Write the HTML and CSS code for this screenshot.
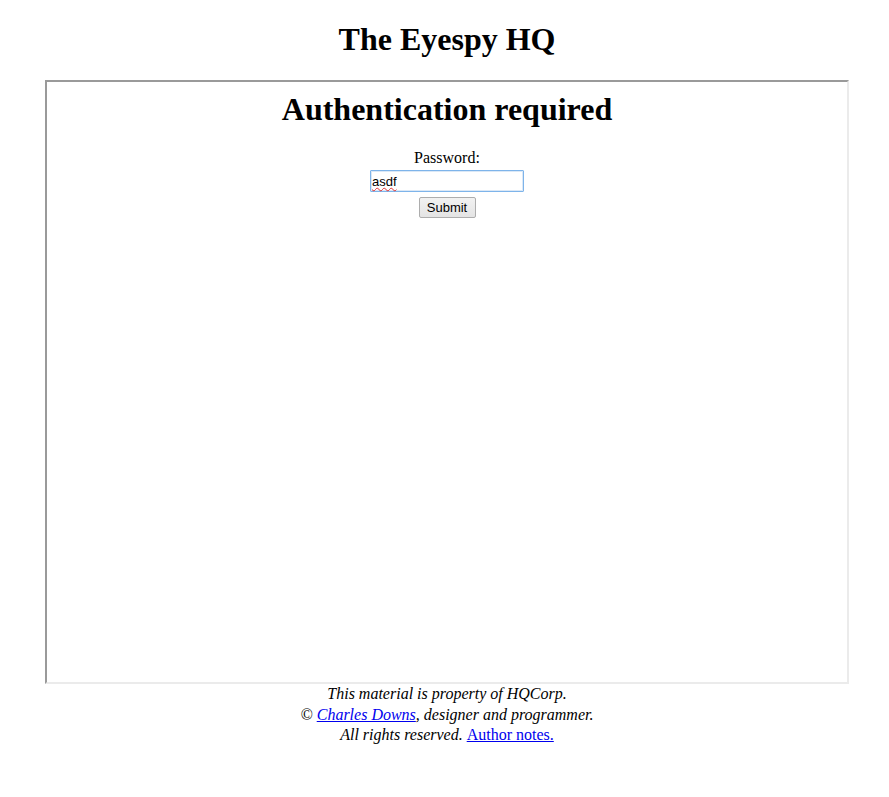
FILE: index.html
```html
<!DOCTYPE html>
<html>
<head>
<meta charset="utf-8">
<title>The Eyespy HQ</title>
<link rel="stylesheet" href="styles.css">
</head>
<body>
<div class="page">
  <h1 class="site-title">The Eyespy HQ</h1>
  <div class="frame">
    <h1 class="auth-title">Authentication required</h1>
    <form class="auth-form">
      <label class="pw-label" for="pw">Password:</label>
      <div class="input-wrap">
        <input class="pw-input" id="pw" type="text" value="asdf">
        <span class="spell" aria-hidden="true">asdf</span>
      </div>
      <button class="submit-btn" type="button">Submit</button>
    </form>
  </div>
  <div class="footer">
    <div>This material is property of HQCorp.</div>
    <div>© <a href="#">Charles Downs</a>, designer and programmer.</div>
    <div>All rights reserved. <a href="#" class="plain">Author notes.</a></div>
  </div>
</div>
</body>
</html>
```
FILE: styles.css
```css
html, body {
  margin: 0;
  padding: 0;
  background: #ffffff;
}
body {
  font-family: "Liberation Serif", "Times New Roman", serif;
  font-size: 16px;
  color: #000;
}
.page {
  padding: 21px 0 0 5px;
}
.site-title {
  margin: 0;
  text-align: center;
  font-size: 32px;
  font-weight: bold;
  line-height: 37px;
}
.frame {
  margin: 22px 0 0 40px;
  width: 800px;
  height: 591px;
  border-style: solid;
  border-width: 2px;
  border-color: #9a9a9a #ebebeb #ebebeb #9a9a9a;
  padding-top: 9px;
  box-sizing: content-box;
}
.auth-title {
  margin: 0;
  text-align: center;
  font-size: 32px;
  font-weight: bold;
  line-height: 37px;
}
.auth-form {
  margin-top: 21px;
  display: flex;
  flex-direction: column;
  align-items: center;
}
.pw-label {
  line-height: 18px;
}
.input-wrap {
  position: relative;
  margin-top: 3px;
  width: 154px;
  height: 22px;
}
.pw-input {
  display: block;
  width: 154px;
  height: 22px;
  box-sizing: border-box;
  border: 1px solid #7eb4ea;
  box-shadow: inset 0 0 0 1px #dbe8f6;
  padding: 0 1px;
  margin: 0;
  font-family: "Liberation Sans", Arial, sans-serif;
  font-size: 13px;
  color: #000;
  outline: none;
  border-radius: 1px;
}
.spell {
  position: absolute;
  left: 2px;
  top: 3px;
  font-family: "Liberation Sans", Arial, sans-serif;
  font-size: 13px;
  line-height: 15px;
  color: transparent;
  text-decoration: underline wavy #e03030;
  text-decoration-thickness: 1px;
  text-underline-offset: 2px;
  pointer-events: none;
}
.submit-btn {
  margin-top: 5px;
  width: 57px;
  height: 21px;
  box-sizing: border-box;
  border: 1px solid #adadad;
  border-radius: 2px;
  background: linear-gradient(#f2f2f2, #e4e4e4);
  font-family: "Liberation Sans", Arial, sans-serif;
  font-size: 13px;
  color: #000;
  padding: 0;
}
.footer {
  margin-left: 40px;
  width: 804px;
  text-align: center;
  font-style: italic;
  line-height: 20.5px;
}
.footer a {
  color: #0000ee;
  text-decoration: underline;
}
.footer a.plain {
  font-style: normal;
}
```
